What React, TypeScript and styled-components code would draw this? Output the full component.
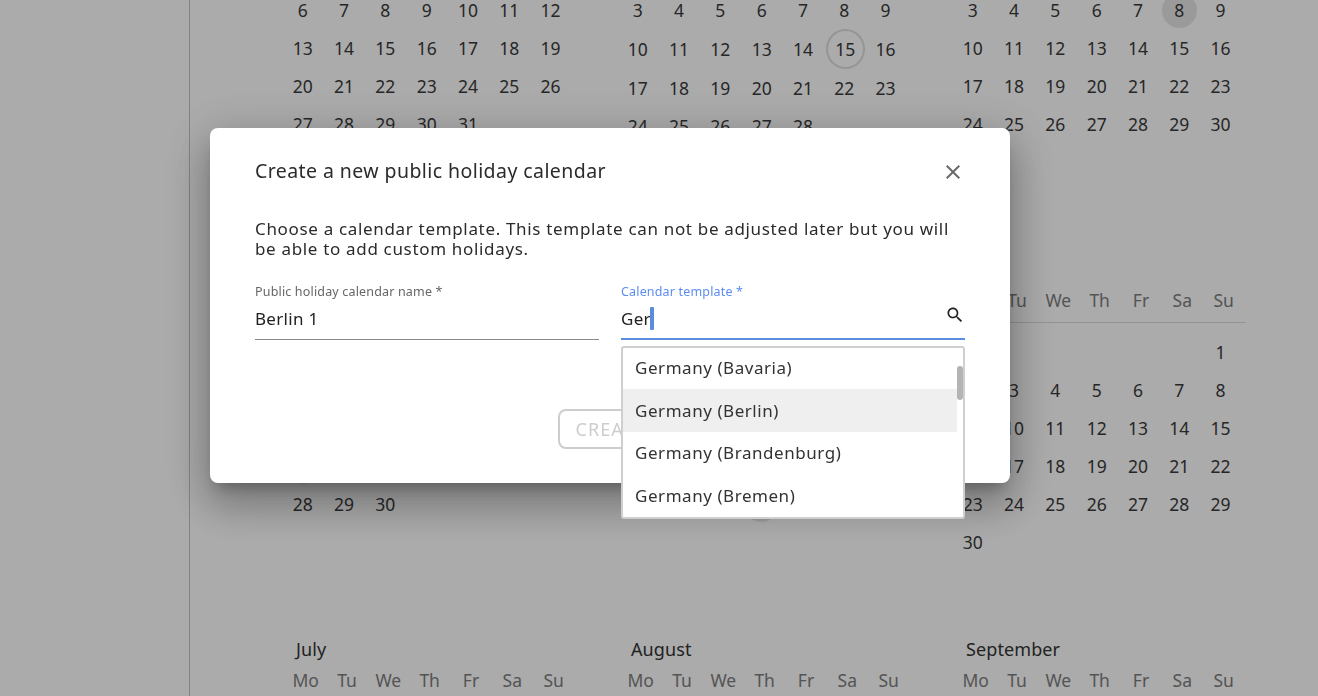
import React from "react";
import styled, { createGlobalStyle } from "styled-components";

const FONT = `"Noto Sans", "Open Sans", Arial, sans-serif`;

const GlobalStyle = createGlobalStyle`
  html, body {
    margin: 0;
    height: 100%;
    background: #fff;
    font-family: ${FONT};
  }
  * { box-sizing: border-box; }
`;

const WEEKDAYS = ["Mo", "Tu", "We", "Th", "Fr", "Sa", "Su"];
const MONTH_NAMES = [
  "January", "February", "March", "April", "May", "June",
  "July", "August", "September", "October", "November", "December",
];
const YEAR = 2025;
const TODAY = "1-15";
const HOLIDAYS = ["0-1", "2-8", "3-18", "3-21", "4-1", "4-29", "5-9"];

const Shell = styled.div`
  display: flex;
  height: 100vh;
  overflow: hidden;
`;

const Sidebar = styled.aside`
  flex: 0 0 190px;
  border-right: 1px solid #c4c4c4;
`;

const YearGrid = styled.main`
  display: grid;
  grid-template-columns: repeat(3, 299px);
  grid-auto-rows: 380px;
  column-gap: 36px;
  margin-top: -126px;
  padding-left: 87px;
  align-content: start;
`;

const MonthBox = styled.section`
  width: 299px;
`;

const MonthTitle = styled.h3`
  margin: 0;
  height: 30px;
  padding-left: 19px;
  font-size: 18px;
  font-weight: 400;
  line-height: 30px;
  letter-spacing: 0.1px;
  color: #333;
`;

const WeekHeader = styled.div`
  display: grid;
  grid-template-columns: repeat(7, 41.33px);
  height: 39px;
  padding: 0.5px 0 0 8px;
  border-bottom: 1px solid #dcdcdc;
  font-size: 17.5px;
  line-height: 30px;
  color: #7e7e7e;
  text-align: center;
`;

const DayGrid = styled.div`
  display: grid;
  grid-template-columns: repeat(7, 41.33px);
  grid-auto-rows: minmax(38px, auto);
  align-items: center;
  padding: 10px 0 0 5px;
`;

const Day = styled.div<{ $holiday?: boolean; $today?: boolean }>`
  justify-self: center;
  display: flex;
  align-items: center;
  justify-content: center;
  width: ${(p) => (p.$today ? "39px" : "35px")};
  height: ${(p) => (p.$today ? "40px" : "35px")};
  margin-left: ${(p) => (p.$today ? "2px" : "0")};
  border-radius: 50%;
  border: ${(p) => (p.$today ? "2px solid #dedede" : "none")};
  background: ${(p) => (p.$holiday ? "#e6e6e6" : "transparent")};
  font-size: 17.5px;
  color: #3a3a3a;
`;

const Overlay = styled.div`
  position: fixed;
  inset: 0;
  display: flex;
  align-items: flex-start;
  padding: 128px 0 0 210px;
  background: rgba(0, 0, 0, 0.33);
`;

const Modal = styled.div`
  width: 800px;
  height: 355px;
  padding: 28px 45px 34px;
  border-radius: 8px;
  background: #fff;
  box-shadow: 0 11px 15px -7px rgba(0, 0, 0, 0.26),
    0 24px 38px 3px rgba(0, 0, 0, 0.18), 0 9px 46px 8px rgba(0, 0, 0, 0.16);
`;

const ModalHeader = styled.div`
  display: flex;
  align-items: center;
  justify-content: space-between;
  height: 32px;
  margin-bottom: 31px;
`;

const Title = styled.h2`
  margin: -3px 0 0;
  font-size: 19.5px;
  font-weight: 400;
  letter-spacing: 0.42px;
  color: #2b2b2b;
`;

const CloseButton = styled.button`
  display: flex;
  padding: 0;
  border: 0;
  background: none;
  color: #6a6a6a;
`;

const Intro = styled.p`
  margin: 0 0 25px;
  font-size: 17px;
  line-height: 20px;
  letter-spacing: 0.67px;
  color: #2b2b2b;
`;

const Fields = styled.div`
  display: grid;
  grid-template-columns: 344px 344px;
  column-gap: 22px;
`;

const Field = styled.div`
  position: relative;
`;

const FieldLabel = styled.label<{ $focused?: boolean }>`
  display: block;
  height: 16px;
  font-size: 12.5px;
  line-height: 16px;
  letter-spacing: 0.17px;
  color: ${(p) => (p.$focused ? "#5b8def" : "#666")};
`;

const InputLine = styled.div<{ $focused?: boolean }>`
  display: flex;
  align-items: center;
  justify-content: space-between;
  height: 40px;
  padding-bottom: 2px;
  border-bottom: ${(p) => (p.$focused ? "2px solid #5b8ddf" : "1px solid #8a8a8a")};
  font-size: 17px;
  letter-spacing: 0.3px;
  color: #222;
`;

const Typed = styled.span`
  display: flex;
  align-items: center;
`;

const Caret = styled.i`
  display: block;
  width: 4px;
  height: 23px;
  margin-left: -1px;
  border-radius: 1px;
  background: #5b8ddf;
`;

const SearchIcon = styled.svg`
  width: 20px;
  height: 20px;
  margin: -6px 0 0 0;
  fill: #222;
`;

const Dropdown = styled.div`
  position: absolute;
  top: 62px;
  left: 0;
  display: flex;
  width: 344px;
  height: 173px;
  overflow: hidden;
  border: 2px solid #cfcfcf;
  border-radius: 3px;
  background: #fff;
`;

const OptionList = styled.ul`
  flex: 0 0 334px;
  margin: -1.7px 0 0;
  padding: 0;
  list-style: none;
`;

const Option = styled.li<{ $active?: boolean }>`
  display: flex;
  align-items: center;
  height: 42.6px;
  padding-left: 12px;
  background: ${(p) => (p.$active ? "#efefef" : "transparent")};
  font-size: 17px;
  letter-spacing: 0.55px;
  color: #333;
`;

const ScrollThumb = styled.div`
  width: 6px;
  height: 34px;
  margin-top: 18px;
  border-radius: 3px;
  background: #b4b4b4;
`;

const Footer = styled.div`
  display: flex;
  justify-content: center;
  margin-top: 69px;
`;

const CreateButton = styled.button`
  width: 104px;
  height: 40px;
  padding: 0;
  border: 2px solid #cdcdcd;
  border-radius: 8px;
  background: #fff;
  font-family: ${FONT};
  font-size: 18px;
  letter-spacing: 1px;
  color: #cdcdcd;
`;

function Month({ index }: { index: number }) {
  const first = (new Date(YEAR, index, 1).getDay() + 6) % 7;
  const count = new Date(YEAR, index + 1, 0).getDate();
  const days = Array.from({ length: count }, (_, i) => i + 1);
  return (
    <MonthBox>
      <MonthTitle>{MONTH_NAMES[index]}</MonthTitle>
      <WeekHeader>
        {WEEKDAYS.map((d) => (
          <span key={d}>{d}</span>
        ))}
      </WeekHeader>
      <DayGrid>
        {Array.from({ length: first }, (_, i) => (
          <span key={`empty-${i}`} />
        ))}
        {days.map((d) => (
          <Day
            key={d}
            $today={`${index}-${d}` === TODAY}
            $holiday={HOLIDAYS.includes(`${index}-${d}`)}
          >
            {d}
          </Day>
        ))}
      </DayGrid>
    </MonthBox>
  );
}

export default function App() {
  return (
    <>
      <GlobalStyle />
      <Shell>
        <Sidebar />
        <YearGrid>
          {MONTH_NAMES.slice(0, 9).map((name, i) => (
            <Month key={name} index={i} />
          ))}
        </YearGrid>
      </Shell>
      <Overlay>
        <Modal>
          <ModalHeader>
            <Title>Create a new public holiday calendar</Title>
            <CloseButton aria-label="Close">
              <svg width="24" height="24" viewBox="0 0 24 24" fill="currentColor">
                <path d="M19 6.41 17.59 5 12 10.59 6.41 5 5 6.41 10.59 12 5 17.59 6.41 19 12 13.41 17.59 19 19 17.59 13.41 12z" />
              </svg>
            </CloseButton>
          </ModalHeader>
          <Intro>
            Choose a calendar template. This template can not be adjusted later but
            you will be able to add custom holidays.
          </Intro>
          <Fields>
            <Field>
              <FieldLabel>Public holiday calendar name *</FieldLabel>
              <InputLine>Berlin 1</InputLine>
            </Field>
            <Field>
              <FieldLabel $focused>Calendar template *</FieldLabel>
              <InputLine $focused>
                <Typed>
                  Ger
                  <Caret />
                </Typed>
                <SearchIcon viewBox="0 0 24 24">
                  <path d="M15.5 14h-.79l-.28-.27C15.41 12.59 16 11.11 16 9.5 16 5.91 13.09 3 9.5 3S3 5.91 3 9.5 5.91 16 9.5 16c1.61 0 3.09-.59 4.23-1.57l.27.28v.79l5 4.99L20.49 19l-4.99-5zm-6 0C7.01 14 5 11.99 5 9.5S7.01 5 9.5 5 14 7.01 14 9.5 11.99 14 9.5 14z" />
                </SearchIcon>
              </InputLine>
              <Dropdown>
                <OptionList>
                  <Option>Germany (Bavaria)</Option>
                  <Option $active>Germany (Berlin)</Option>
                  <Option>Germany (Brandenburg)</Option>
                  <Option>Germany (Bremen)</Option>
                  <Option>Germany (Hamburg)</Option>
                </OptionList>
                <ScrollThumb />
              </Dropdown>
            </Field>
          </Fields>
          <Footer>
            <CreateButton>CREATE</CreateButton>
          </Footer>
        </Modal>
      </Overlay>
    </>
  );
}
